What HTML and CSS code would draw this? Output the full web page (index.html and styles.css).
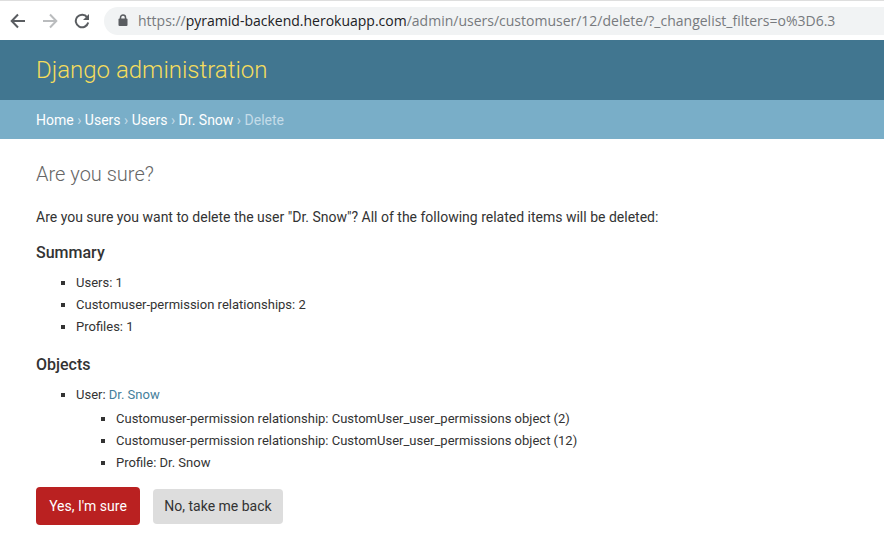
FILE: index.html
```html
<!DOCTYPE html>
<html lang="en">
<head>
<meta charset="utf-8">
<title>Are you sure? | Django site admin</title>
<link rel="stylesheet" href="styles.css">
</head>
<body>
<div class="toolbar">
  <svg class="nav" viewBox="0 0 16 16"><path d="M15 8H2M8 1.5 1.7 8 8 14.5"/></svg>
  <svg class="nav off" viewBox="0 0 16 16"><path d="M1 8h13M8 1.5 14.300 8 8 14.5"/></svg>
  <svg class="nav" viewBox="0 0 16 16"><path d="M13.200 4.300A6.300 6.300 0 1 0 14.200 9.500"/><path class="fill" d="M15 1v6H9z"/></svg>
  <div class="omnibox">
    <svg class="lock" viewBox="0 0 10 13"><path d="M2.500 5V3.500a2.500 2.500 0 0 1 5 0V5"/><rect x=".5" y="4.500" width="9" height="7.500" rx="1"/></svg>
    <span class="url">https://<b>pyramid-backend.herokuapp.com</b>/admin/users/customuser/12/delete/?_changelist_filters=o%3D6.3</span>
  </div>
</div>
<header class="header"><h1>Django administration</h1></header>
<nav class="breadcrumbs"><a>Home</a> › <a>Users</a> › <a>Users</a> › <a>Dr. Snow</a> › Delete</nav>
<main class="content">
  <h2 class="title">Are you sure?</h2>
  <p class="question">Are you sure you want to delete the user "Dr. Snow"? All of the following related items will be deleted:</p>
  <h3>Summary</h3>
  <ul class="summary">
    <li>Users: 1</li>
    <li>Customuser-permission relationships: 2</li>
    <li>Profiles: 1</li>
  </ul>
  <h3>Objects</h3>
  <ul class="objects">
    <li>User: <a>Dr. Snow</a>
      <ul>
        <li>Customuser-permission relationship: CustomUser_user_permissions object (2)</li>
        <li>Customuser-permission relationship: CustomUser_user_permissions object (12)</li>
        <li>Profile: Dr. Snow</li>
      </ul>
    </li>
  </ul>
  <div class="actions"><button class="confirm">Yes, I'm sure</button><button class="cancel">No, take me back</button></div>
</main>
</body>
</html>
```
FILE: styles.css
```css
* { box-sizing: border-box; }
body { margin: 0; background: #fff; color: #333; font: 14px/22px Roboto, sans-serif; }
.toolbar { height: 40px; display: flex; align-items: center; padding-left: 10px; border-top: 1px solid #dedede; }
.nav { width: 16px; height: 16px; margin-right: 16px; fill: none; stroke: #5a5d61; stroke-width: 2; }
.nav .fill { fill: #5a5d61; stroke: none; }
.off { stroke: #babcbe; }
.omnibox { flex: 1; height: 28px; margin-left: -2px; padding-left: 14px; display: flex; align-items: center; background: #f1f3f4; border-radius: 14px 0 0 14px; }
.lock { width: 10px; height: 13px; margin-right: 10px; fill: none; stroke: #5a5d61; stroke-width: 1.500; }
.lock rect { fill: #5a5d61; stroke: none; }
.url { font: 14px/20px "Open Sans", sans-serif; color: #777a7e; white-space: nowrap; }
.url b { font-weight: 400; color: #202124; }
.header { height: 60px; padding: 0 36px; display: flex; align-items: center; background: #417690; }
h1 { margin: 0; font-size: 24px; font-weight: 300; color: #f5dd5d; }
.breadcrumbs { height: 39px; padding: 9px 36px; background: #79aec8; color: #c4dce8; }
.breadcrumbs a { color: #fff; }
.content { padding: 23px 36px; }
.title { margin: 0 0 20px; font-size: 20px; font-weight: 300; line-height: 24px; color: #666; }
.question { margin: 0; }
h3 { margin: 14px 0 8px; font-size: 16px; font-weight: 500; line-height: 22px; }
ul { margin: 0; padding: 0 0 0 40px; list-style: square; font-size: 13px; }
.summary { margin-bottom: 16px; }
ul ul { margin-top: 2px; }
.objects a { color: #447e9b; }
.actions { display: flex; align-items: center; gap: 13px; margin-top: 13px; }
button { border: 0; border-radius: 4px; padding: 0; font: 14px Roboto, sans-serif; }
.confirm { width: 104px; height: 38px; background: #ba2121; color: #fff; }
.cancel { width: 130px; height: 35px; background: #ddd; color: #333; }
```
